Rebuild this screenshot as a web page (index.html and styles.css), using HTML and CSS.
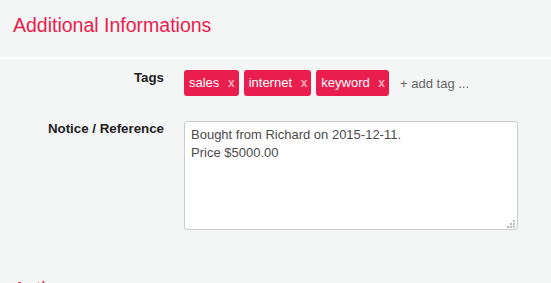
FILE: index.html
```html
<!DOCTYPE html>
<html lang="en">
<head>
  <meta charset="UTF-8">
  <meta name="viewport" content="width=device-width, initial-scale=1.0">
  <title>Additional Informations</title>
  <link rel="stylesheet" href="styles.css">
</head>
<body>
  <div class="section">
    <h2 class="section-title">Additional Informations</h2>
    <div class="section-body">
      <div class="form-row">
        <label class="form-label">Tags</label>
        <div class="tags">
          <span class="tag">sales <span class="tag-remove">x</span></span>
          <span class="tag">internet <span class="tag-remove">x</span></span>
          <span class="tag">keyword <span class="tag-remove">x</span></span>
          <span class="add-tag">+ add tag ...</span>
        </div>
      </div>

      <div class="form-row">
        <label class="form-label" for="notice">Notice / Reference</label>
        <div class="notice-wrap">
          <textarea id="notice" class="notice">Bought from Richard on 2015-12-11.
Price $5000.00</textarea>
          <svg class="grip" width="8" height="8" viewBox="0 0 8 8">
            <rect x="6" y="0" width="2" height="2"/>
            <rect x="3" y="3" width="2" height="2"/>
            <rect x="6" y="3" width="2" height="2"/>
            <rect x="0" y="6" width="2" height="2"/>
            <rect x="3" y="6" width="2" height="2"/>
            <rect x="6" y="6" width="2" height="2"/>
          </svg>
        </div>
      </div>
    </div>
  </div>

  <div class="section">
    <h2 class="section-title">Actions</h2>
  </div>
</body>
</html>
```

FILE: styles.css
```css
body {
  margin: 0;
  background: #f4f5f5;
  font-family: "Liberation Sans", Arial, sans-serif;
  color: #333;
}
.section-title {
  margin: 0;
  padding: 13px 13px 20px;
  font-size: 19.5px;
  line-height: 24px;
  font-weight: normal;
  color: #e91d4e;
  border-bottom: 2px solid #fff;
}
.section-body {
  padding: 11px 0 34px;
}
.form-row {
  display: grid;
  grid-template-columns: 164px 334px;
  column-gap: 20px;
  margin-bottom: 25px;
}
.form-row:last-child {
  margin-bottom: 0;
}
.form-label {
  text-align: right;
  font-size: 13.3px;
  font-weight: bold;
  line-height: 14px;
  padding-top: 1px;
  color: #222;
}
.tags {
  display: flex;
  align-items: center;
  gap: 5px;
}
.tag {
  background: #e91d4e;
  color: #fff;
  font-size: 13px;
  line-height: 18px;
  padding: 4px 4px 4px 5px;
  border-radius: 3px;
}
.tag-remove {
  margin-left: 5px;
  font-size: 12px;
  font-weight: bold;
  color: #f6a9bb;
}
.add-tag {
  margin-left: 6px;
  font-size: 13px;
  color: #666;
}
.notice-wrap {
  position: relative;
  width: 334px;
  height: 109px;
}
.notice {
  box-sizing: border-box;
  display: block;
  width: 100%;
  height: 100%;
  margin: 0;
  padding: 4px 6px;
  border: 1px solid #ccc;
  border-radius: 3px;
  background: #fff;
  font-family: "Liberation Sans", Arial, sans-serif;
  font-size: 13px;
  line-height: 18px;
  color: #4a4a4a;
  resize: none;
}
.grip {
  position: absolute;
  right: 3px;
  bottom: 2px;
  fill: #bbb;
}
```
